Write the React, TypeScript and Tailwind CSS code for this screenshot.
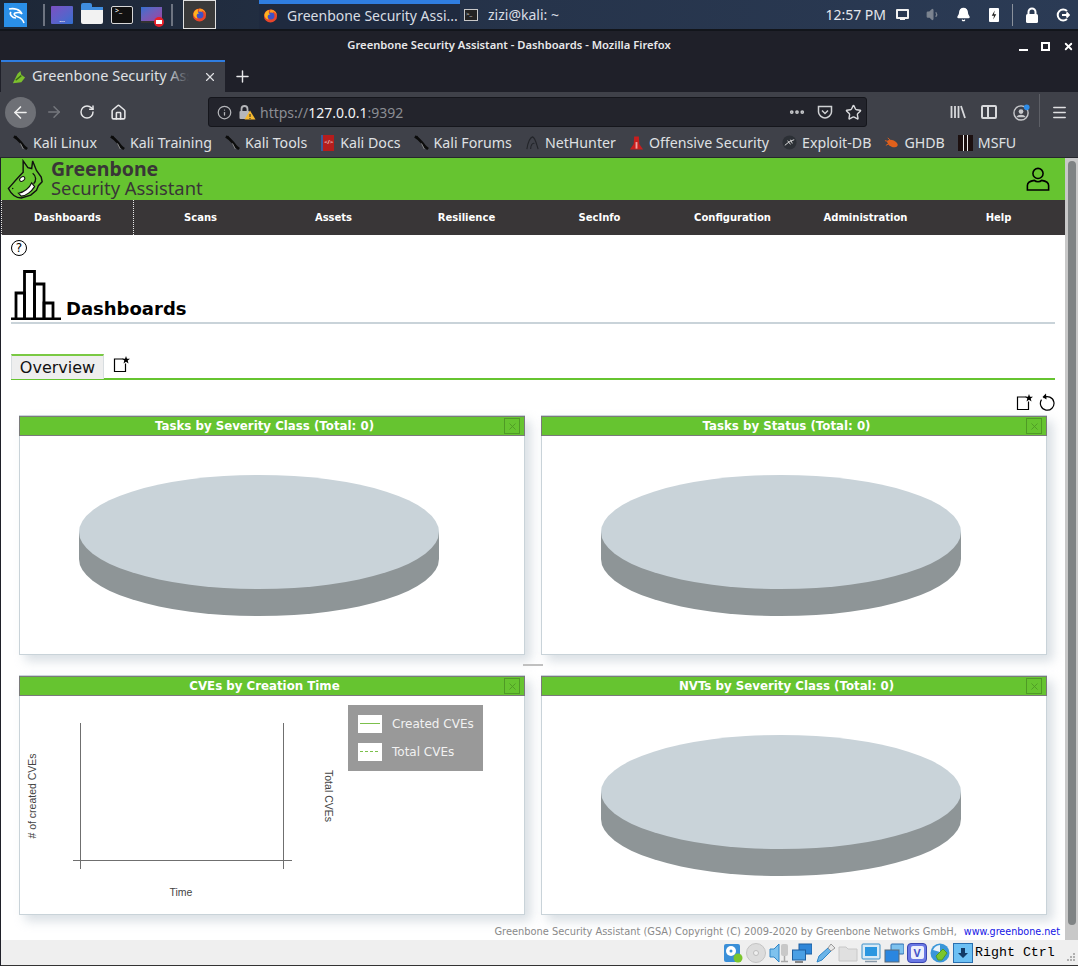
import React from 'react';
import {
  ArrowLeft, ArrowRight, RotateCw, Home, Info, MoreHorizontal, Star, Menu, Plus, X, Bell, Volume1,
} from 'lucide-react';

const BROWSER_FONT = "font-['Noto_Sans',sans-serif]";
const PAGE_FONT = "font-['DejaVu_Sans',sans-serif]";

const navItems = ['Dashboards', 'Scans', 'Assets', 'Resilience', 'SecInfo', 'Configuration', 'Administration', 'Help'];

const KaliIcon = () => (
  <svg viewBox="0 0 16 16" className="w-[15px] h-[15px]">
    <path d="M1 1.500 L5 4.500 L8.500 8 L12 12.500 L15 15" stroke="#0c0c0c" strokeWidth="2.800" fill="none" />
    <path d="M3 1 L7 7" stroke="#0c0c0c" strokeWidth="1.200" fill="none" />
    <path d="M8 9 L11 15" stroke="#8a8a8a" strokeWidth="1" fill="none" />
  </svg>
);

const bookmarks: { label: string; icon: React.ReactNode }[] = [
  { label: 'Kali Linux', icon: <KaliIcon /> },
  { label: 'Kali Training', icon: <KaliIcon /> },
  { label: 'Kali Tools', icon: <KaliIcon /> },
  {
    label: 'Kali Docs',
    icon: <span className="block w-[13px] h-[16px] bg-[#b51d1d] border-l-2 border-[#3a5a9a] text-white text-[6px] leading-[15px] text-center">&lt;/&gt;</span>,
  },
  { label: 'Kali Forums', icon: <KaliIcon /> },
  {
    label: 'NetHunter',
    icon: (
      <svg viewBox="0 0 16 16" className="w-[15px] h-[15px]">
        <path d="M2 15 C3 9 5 3 8 2 C11 3 12 9 14 15 M6 15 C6 11 8 8 10 9" stroke="#23252a" strokeWidth="1.200" fill="none" />
      </svg>
    ),
  },
  {
    label: 'Offensive Security',
    icon: (
      <svg viewBox="0 0 16 16" className="w-[15px] h-[16px]">
        <path d="M5.500 1 H10.500 L11 9 L15 15 H1 L5 9 Z" fill="#c81e1e" />
        <path d="M7 7 H9 V14 H7 Z" fill="#f0a0a0" />
      </svg>
    ),
  },
  {
    label: 'Exploit-DB',
    icon: (
      <svg viewBox="0 0 16 16" className="w-[15px] h-[15px]">
        <circle cx="8" cy="8" r="7.500" fill="#2c3036" />
        <path d="M3 11 L8 7 L13 5 M6 6 L9 10 M9 5 L11 9" stroke="#ddd" strokeWidth="1" fill="none" />
      </svg>
    ),
  },
  {
    label: 'GHDB',
    icon: (
      <svg viewBox="0 0 16 16" className="w-[15px] h-[15px]">
        <ellipse cx="9" cy="9" rx="6" ry="3.500" fill="#e0601c" transform="rotate(25 9 9)" />
        <path d="M1 6 L5 7 M2 11 L6 9 M4 3 L7 6" stroke="#e0601c" strokeWidth="1" />
      </svg>
    ),
  },
  {
    label: 'MSFU',
    icon: (
      <span className="flex w-[15px] h-[16px] bg-[#1c1010] justify-center">
        <span className="w-[5px] h-full border-x border-[#eee]" />
      </span>
    ),
  },
];

// flat "empty" pie the dashboards draw when there is no data
const EmptyPie = () => (
  <svg viewBox="0 0 504 218" className="w-full h-full">
    <path d="M59 96 V123 A180 57 0 0 0 419 123 V96 Z" fill="#8e9597" />
    <ellipse cx="239" cy="96" rx="180" ry="57" fill="#c9d3d9" />
  </svg>
);

const LegendLine = ({ dashed }: { dashed?: boolean }) => (
  <svg viewBox="0 0 24 18" className="w-[24px] h-[18px] bg-white">
    <path d="M2 8.500 H22" stroke="#7cc04c" strokeWidth="1" strokeDasharray={dashed ? '3 2' : undefined} />
  </svg>
);

const LineChart = () => (
  <div className="relative w-full h-full">
    <svg viewBox="0 0 504 218" className="w-full h-full">
      <g stroke="#6f6f6f" strokeWidth="1" fill="none">
        <path d="M60.500 27 V173" />
        <path d="M263.500 27 V173" />
        <path d="M53 164.500 H272" />
      </g>
      <g fontFamily="'Liberation Sans', sans-serif" fontSize="10.500" fill="#444">
        <text x="161" y="200" textAnchor="middle">Time</text>
        <text transform="translate(16 100) rotate(-90)" textAnchor="middle"># of created CVEs</text>
        <text transform="translate(305 100) rotate(90)" textAnchor="middle">Total CVEs</text>
      </g>
    </svg>
    <div className="absolute left-[328px] top-[9px] w-[135px] h-[66px] bg-[#999999] text-[#f2f2f2] text-[12px]">
      <div className="flex items-center h-[18px] mt-[10px] ml-[10px]">
        <LegendLine />
        <span className="ml-[10px]">Created CVEs</span>
      </div>
      <div className="flex items-center h-[18px] mt-[10px] ml-[10px]">
        <LegendLine dashed />
        <span className="ml-[10px]">Total CVEs</span>
      </div>
    </div>
  </div>
);

const Panel = ({ title, children }: { title: string; children: React.ReactNode }) => (
  <div className="h-[240px] flex flex-col bg-white border border-[#c9d3d9] shadow-[6px_6px_10px_rgba(170,185,195,0.45)]">
    <div className="relative h-[20px] shrink-0 -mx-px pr-[15px] bg-[#66c430] border border-[#7a7a7a] text-center text-white font-bold text-[11.8px] leading-[18px]">
      {title}
      <span className="absolute right-[4px] top-[1px] w-[16px] h-[16px] border border-[#4f9a26] flex items-center justify-center">
        <X className="w-[11px] h-[11px] text-[#4f9a26]" strokeWidth={2} />
      </span>
    </div>
    <div className="flex-1 min-h-0">{children}</div>
  </div>
);

const NewDashboardIcon = () => (
  <svg viewBox="0 0 18 18" className="w-[18px] h-[18px]">
    <path d="M10.500 4 H1.500 V16.500 H12.500 V8.500" fill="none" stroke="#000" strokeWidth="1.200" />
    <path d="M13 1 L14 3.700 L17 3.800 L14.700 5.600 L15.500 8.400 L13 6.800 L10.500 8.400 L11.300 5.600 L9 3.800 L12 3.700 Z" fill="#000" />
  </svg>
);

const DashboardLogo = () => (
  <svg viewBox="0 0 50 50" className="w-[50px] h-[50px] shrink-0">
    <g fill="none" stroke="#000" strokeWidth="2.800">
      <path d="M5 49 V23 H13.500 V49" />
      <path d="M13.500 49 V1.500 H23.500 V49" />
      <path d="M23.500 49 V14 H33 V49" />
      <path d="M33 49 V33 H42 V49" />
    </g>
    <path d="M0 47.500 H50 V50 H0 Z" fill="#000" />
  </svg>
);

const GreenboneLogo = () => (
  <svg viewBox="0 0 40 42" className="w-[38px] h-[40px] shrink-0">
    <path
      d="M1.500 31 C6 26 11 20 17 14 L17 2 L22 9 L26 10 L27 2 L31 12 L36 19 L37 24 L33 28 L31 33 L25 38 L15 41 C9 41 4 36 1.500 31 Z"
      fill="#66c430"
      stroke="#111"
      strokeWidth="1.500"
    />
    <ellipse cx="16" cy="21" rx="3" ry="2" fill="#fff" stroke="#111" transform="rotate(-35 16 21)" />
    <path d="M12 36 C18 35 24 30 26 25 L29 29 C26 34 20 39 15 39 Z" fill="#fff" stroke="#111" strokeWidth="1.200" />
    <path d="M27 15 C31 18 31 23 28 26" fill="none" stroke="#111" strokeWidth="1.400" />
    <circle cx="6" cy="31" r="0.800" fill="#111" />
  </svg>
);

const FirefoxIcon = ({ className }: { className: string }) => (
  <svg viewBox="0 0 16 16" className={className}>
    <circle cx="8" cy="8.500" r="7" fill="#e8452c" />
    <path d="M8 1.500 C12 1.500 15 5 15 8.500 C14 5 12 4 10 4 C11 5 11 6 10.500 7 L7 6 Z" fill="#ff9a1f" />
    <circle cx="8.500" cy="8.500" r="3.700" fill="#3d52c8" />
    <path d="M1.500 7 C2.500 3.500 5 2 7 2 C5.500 4 6 6 8 7 C5 7 4 9 6 12.500 C3 12 1.500 9.500 1.500 7 Z" fill="#ffb21f" />
  </svg>
);

const Taskbar = () => (
  <div className={`h-[31px] shrink-0 flex items-center bg-gradient-to-r from-[#1d2737] via-[#26344b] to-[#2b3b55] border-b-2 border-[#12151b] ${BROWSER_FONT}`}>
    <div className="w-[23px] h-[24px] ml-[4px] bg-[#2a8fe8] flex items-center justify-center">
      <svg viewBox="0 0 20 20" className="w-[20px] h-[20px]">
        <path d="M3 4 C8 3 14 4 16 9 C15 8 12 7 9 8 C7 9 9 11 12 12 C15 13 17 15 18 18 M5 7 C3 9 6 13 10 13" fill="none" stroke="#fff" strokeWidth="1.600" />
      </svg>
    </div>
    <span className="w-[2px] h-[22px] ml-[16px] bg-[#6d7481]" />
    <span className="w-[22px] h-[18px] ml-[6px] rounded-[1px] bg-gradient-to-br from-[#7a4fc2] to-[#2d6fd0] flex items-end justify-center text-white text-[7px] leading-[8px]">...</span>
    <span className="relative w-[22px] h-[17px] ml-[8px] mt-[2px] rounded-[2px] bg-[#f2f2f2]">
      <span className="absolute -top-[4px] left-0 w-[11px] h-[5px] rounded-t-[2px] bg-[#3f8de0]" />
      <span className="absolute top-0 left-0 w-full h-[3px] bg-[#3f8de0]" />
    </span>
    <span className="w-[22px] h-[18px] ml-[8px] rounded-[2px] bg-[#111] border border-[#d8d8d8] text-white text-[7px] leading-[8px] pl-[3px]">&gt;_</span>
    <span className="relative w-[21px] h-[16px] ml-[8px] bg-gradient-to-br from-[#2d6fd0] to-[#9a3fa0] border-b-2 border-[#333]">
      <span className="absolute -right-[2px] -bottom-[6px] w-[10px] h-[10px] rounded-full bg-[#e8202a] flex items-center justify-center">
        <span className="w-[6px] h-[4px] bg-white" />
      </span>
    </span>
    <span className="w-[2px] h-[22px] ml-[9px] bg-[#6d7481]" />
    <span className="w-[33px] h-[29px] ml-[10px] bg-[#3a3a3a] border border-[#e0e0e0] flex items-center justify-center">
      <FirefoxIcon className="w-[15px] h-[15px]" />
    </span>
    <div className="w-[201px] h-[29px] ml-[43px] self-start flex items-center bg-[#1f2a3f] border-t-[4px] border-[#2f7de0] pl-[4px] pb-[3px] text-[#d8dde4] text-[14px] whitespace-nowrap">
      <FirefoxIcon className="w-[15px] h-[15px]" />
      <span className="ml-[9px]">Greenbone Security Assi...</span>
    </div>
    <div className="flex items-center h-[29px] ml-[4px] text-[#d8dde4] text-[14px] whitespace-nowrap">
      <span className="w-[14px] h-[12px] bg-[#222] border border-[#c8c8c8] text-white text-[6px] leading-[8px] pl-[1px]">&gt;_</span>
      <span className="ml-[10px]">zizi@kali: ~</span>
    </div>
    <div className="ml-auto flex items-center text-[#e4e7ec]">
      <span className="text-[14px] whitespace-nowrap">12:57 PM</span>
      <span className="flex flex-col items-center ml-[10px]">
        <span className="w-[13px] h-[10px] border-2 border-[#f2f2f2] rounded-[1px]" />
        <span className="w-[5px] h-[1px] bg-[#f2f2f2]" />
      </span>
      <Volume1 className="w-[15px] h-[15px] ml-[17px] text-[#7c8490]" fill="#7c8490" />
      <Bell className="w-[15px] h-[15px] ml-[15px] text-white" fill="#fff" />
      <span className="w-[10px] h-[14px] ml-[18px] bg-white rounded-[1px] flex items-center justify-center">
        <svg viewBox="0 0 8 12" className="w-[6px] h-[10px]">
          <path d="M5 0 L1 7 H4 L3 12 L7 5 H4 Z" fill="#222" />
        </svg>
      </span>
      <span className="w-[1px] h-[22px] ml-[13px] bg-[#8a919c]" />
      <svg viewBox="0 0 14 16" className="w-[14px] h-[16px] ml-[12px]">
        <path d="M3.500 7 V5 A3.500 3.500 0 0 1 10.500 5 V7" fill="none" stroke="#fff" strokeWidth="2" />
        <rect x="1" y="7" width="12" height="9" rx="1.500" fill="#fff" />
      </svg>
      <svg viewBox="0 0 14 14" className="w-[14px] h-[14px] ml-[17px] mr-[8px]">
        <path d="M11 3 A5.500 5.500 0 1 0 11 11" fill="none" stroke="#fff" strokeWidth="2" />
        <path d="M6 7 H13 M10.500 4.500 L13 7 L10.500 9.500" fill="none" stroke="#fff" strokeWidth="1.800" />
      </svg>
    </div>
  </div>
);

const BrowserChrome = () => (
  <div className={`shrink-0 ${BROWSER_FONT}`}>
    <div className="h-[29px] flex items-center justify-center relative pr-[60px] bg-[#1f2029] text-[#e8e8ea] text-[11.2px] font-semibold">
      Greenbone Security Assistant - Dashboards - Mozilla Firefox
      <div className="absolute right-[4px] top-[10px] flex items-center text-white">
        <span className="w-[9px] h-[9px] flex items-end"><span className="w-full h-[2px] bg-white" /></span>
        <span className="w-[9px] h-[9px] ml-[13px] border-2 border-white" />
        <X className="w-[11px] h-[11px] ml-[13px]" strokeWidth={4} />
      </div>
    </div>
    <div className="h-[32px] flex bg-[#1f2029]">
      <div className="w-[224px] ml-[1px] flex items-center bg-[#3f4149] border-t-2 border-[#2f7de0] text-[#dfe0e3] text-[14.5px] whitespace-nowrap">
        <svg viewBox="0 0 16 16" className="w-[15px] h-[15px] ml-[10px] shrink-0">
          <path d="M2 14 L7 4 L10 1 L11 5 L15 8 L11 13 Z" fill="#7cc02e" />
          <path d="M5 11 L11 6" stroke="#3a6a12" strokeWidth="1.500" />
        </svg>
        <span className="relative ml-[6px] mb-[2px] w-[157px] overflow-hidden">
          Greenbone Security Assis
          <span className="absolute right-0 top-0 bottom-0 w-[22px] bg-gradient-to-r from-transparent to-[#3f4149]" />
        </span>
        <X className="w-[14px] h-[14px] ml-[14px] shrink-0" />
      </div>
      <div className="flex items-center ml-[8px]">
        <Plus className="w-[19px] h-[19px] text-[#e8e8ea]" strokeWidth={1.800} />
      </div>
    </div>
    <div className="h-[36px] flex items-center pt-[4px] bg-[#3f4149]">
      <span className="w-[31px] h-[31px] ml-[5px] rounded-full bg-[#6e7076] flex items-center justify-center">
        <ArrowLeft className="w-[19px] h-[19px] text-[#f0f0f0]" strokeWidth={2} />
      </span>
      <ArrowRight className="w-[18px] h-[18px] ml-[9px] text-[#75777d]" strokeWidth={2} />
      <RotateCw className="w-[16px] h-[16px] ml-[16px] text-[#e6e6e8]" strokeWidth={2.200} />
      <Home className="w-[17px] h-[17px] ml-[15px] text-[#e6e6e8]" strokeWidth={2.200} />
      <div className="w-[659px] h-[30px] ml-[81px] flex items-center rounded-[3px] bg-[#23242c] border border-[#15161c] text-[14px]">
        <Info className="w-[15px] h-[15px] ml-[8px] text-[#b5b6ba]" />
        <svg viewBox="0 0 18 16" className="w-[18px] h-[16px] ml-[6px]">
          <path d="M3.500 7 V5 A3 3 0 0 1 9.500 5 V7" fill="none" stroke="#b5b6ba" strokeWidth="1.800" />
          <rect x="1.500" y="7" width="10" height="8" rx="1" fill="#b5b6ba" />
          <path d="M12 6.500 L17.500 15.500 H6.500 Z" fill="#f5b82e" />
          <path d="M12 10 V13 M12 14 V15" stroke="#222" strokeWidth="1" />
        </svg>
        <span className="ml-[4px] text-[#8b8d93]">https://</span>
        <span className="text-[#f2f2f4]">127.0.0.1</span>
        <span className="text-[#8b8d93]">:9392</span>
        <MoreHorizontal className="w-[18px] h-[18px] ml-auto text-[#c8c9cc]" strokeWidth={3} />
        <svg viewBox="0 0 16 16" className="w-[16px] h-[16px] ml-[11px]">
          <path d="M1.500 2.500 H14.500 V8 C14.500 11 11 14 8 14 C5 14 1.500 11 1.500 8 Z M5 6.500 L8 9.500 L11 6.500" fill="none" stroke="#d0d1d4" strokeWidth="1.500" />
        </svg>
        <Star className="w-[17px] h-[17px] ml-[12px] mr-[4px] text-[#d8d9dc]" strokeWidth={2} />
      </div>
      <svg viewBox="0 0 16 16" className="w-[16px] h-[16px] ml-[83px]">
        <path d="M1.500 2 V14 M5 2 V14 M8.500 2 V14 M11 2 L15 14" stroke="#d8d9dc" strokeWidth="1.800" fill="none" />
      </svg>
      <span className="flex w-[16px] h-[14px] ml-[15px] border-2 border-[#d8d9dc] rounded-[2px]">
        <span className="w-[6px] h-full border-r-2 border-[#d8d9dc]" />
      </span>
      <svg viewBox="0 0 18 18" className="w-[17px] h-[17px] ml-[16px]">
        <circle cx="8.500" cy="9.500" r="7.500" fill="none" stroke="#c8c9cc" strokeWidth="1.500" />
        <circle cx="8.500" cy="8" r="2.500" fill="#c8c9cc" />
        <path d="M3.500 14 C5 10.500 12 10.500 13.500 14" fill="#c8c9cc" />
        <circle cx="14.500" cy="3.500" r="3" fill="#2f8de8" />
      </svg>
      <span className="w-[1px] h-[33px] ml-[9px] -mt-[4px] bg-[#5d5f66]" />
      <Menu className="w-[17px] h-[17px] ml-[11px] text-[#e0e0e2]" strokeWidth={2.200} />
    </div>
    <div className="h-[30px] flex items-center bg-[#3f4149] pl-[13px] pt-px text-[#dfe0e3] text-[14.2px] whitespace-nowrap border-b border-[#26272d]">
      {bookmarks.map(b => (
        <div key={b.label} className="flex items-center mr-[13px]">
          <span className="w-[15px] flex justify-center">{b.icon}</span>
          <span className="ml-[5px]">{b.label}</span>
        </div>
      ))}
    </div>
  </div>
);

const GsaHeader = () => (
  <div className="h-[42px] shrink-0 flex items-center bg-[#66c430] pl-[6px] pr-[15px]">
    <GreenboneLogo />
    <div className={`ml-[6px] -mt-[2px] text-[#393637] ${BROWSER_FONT}`}>
      <div className="text-[19.5px] leading-[19px] font-bold">Greenbone</div>
      <div className="text-[18.4px] leading-[19px]">Security Assistant</div>
    </div>
    <svg viewBox="0 0 26 26" className="w-[24px] h-[24px] ml-auto">
      <circle cx="13" cy="7" r="5.500" fill="none" stroke="#000" strokeWidth="1.700" />
      <path d="M1.500 25 V20 C1.500 16 6 15 9 14.500 C11 16.500 15 16.500 17 14.500 C20 15 24.500 16 24.500 20 V25 Z" fill="none" stroke="#000" strokeWidth="1.700" />
    </svg>
  </div>
);

// the little VirtualBox status icons, bottom right
const statusIcons: React.ReactNode[] = [
  <g key="hdd">
    <rect x="1" y="1" width="16" height="18" rx="2" fill="#3a8fd8" />
    <circle cx="8" cy="8" r="5" fill="#fff" />
    <circle cx="8" cy="8" r="1.500" fill="#3a8fd8" />
    <circle cx="15" cy="15" r="4.500" fill="#7bc62d" />
  </g>,
  <g key="cd">
    <circle cx="10" cy="10" r="9.500" fill="#dcdcdc" stroke="#c4c4c4" />
    <circle cx="10" cy="10" r="2.500" fill="#efefef" stroke="#bdbdbd" />
  </g>,
  <g key="audio">
    <path d="M1 6 H5 L10 1 V19 L5 14 H1 Z" fill="#7ec2ee" stroke="#2f86c8" />
    <rect x="12" y="1" width="7" height="12" rx="2" fill="#c8c8c8" />
    <path d="M15.500 13 V18 M12 18.500 H19" stroke="#a8a8a8" strokeWidth="1.500" />
  </g>,
  <g key="net">
    <rect x="7" y="1" width="13" height="10" fill="#2f86d8" stroke="#1f5f9f" />
    <rect x="0.500" y="7" width="13" height="10" fill="#4a9fe4" stroke="#1f5f9f" />
    <path d="M3 19 H11" stroke="#666" strokeWidth="1.500" />
  </g>,
  <g key="usb">
    <path d="M2 19 L4 13 L13 5 L16 8 L7 17 Z" fill="#6ab4e8" stroke="#2f86c8" />
    <path d="M13 5 L16 1 L20 5 L16 8 Z" fill="#e8e8e8" stroke="#9a9a9a" />
  </g>,
  <g key="folder">
    <path d="M1 4 H8 L10 6 H19 V18 H1 Z" fill="#e0e0e0" stroke="#c8c8c8" />
  </g>,
  <g key="display">
    <rect x="1" y="1" width="18" height="15" rx="1" fill="#d8eaf6" stroke="#3a8fc8" />
    <rect x="4" y="4" width="12" height="9" fill="#2a96e0" />
    <path d="M4 18.500 H16" stroke="#8a9aa8" strokeWidth="1.500" />
  </g>,
  <g key="capture">
    <rect x="7" y="1" width="13" height="10" rx="1" fill="#7ec2ee" stroke="#2f6fb0" />
    <rect x="1" y="7" width="14" height="12" fill="#2a86e0" stroke="#5a6a78" />
  </g>,
  <g key="guest">
    <circle cx="10" cy="10" r="9.500" fill="#3a96d8" />
    <path d="M3 7 A8 8 0 0 1 10 2 L10 9 Z" fill="#e8f2fa" />
    <path d="M6 13 L13 6 L17 10 L12 17 L8 17 Z" fill="#7bc62d" stroke="#4f9a26" />
  </g>,
];

const StatusBar = () => (
  <div className="h-[26px] shrink-0 flex items-center bg-[#efefef] border-b border-[#333] ml-px pl-[722px]">
    {statusIcons.slice(0, 8).map((icon, i) => (
      <svg key={i} viewBox="0 0 20 20" className="w-[20px] h-[20px] mr-[3px] shrink-0">{icon}</svg>
    ))}
    <span className="w-[20px] h-[20px] mr-[3px] rounded-[4px] bg-[#6a78e4] border border-[#3a46b0] flex items-center justify-center">
      <span className="w-[13px] h-[13px] rounded-[2px] bg-[#eef0fc] flex items-center justify-center text-[#4a56c8] text-[11px] leading-none font-bold">V</span>
    </span>
    <svg viewBox="0 0 20 20" className="w-[20px] h-[20px] mr-[3px] shrink-0">{statusIcons[8]}</svg>
    <span className="w-[20px] h-[20px] bg-[#6cc0f4] border border-[#2a70b0] flex items-center justify-center">
      <svg viewBox="0 0 12 12" className="w-[12px] h-[12px]">
        <path d="M4 1 H8 V6 H11 L6 11 L1 6 H4 Z" fill="#123a66" />
      </svg>
    </span>
    <span className="ml-[2px] font-['Liberation_Mono',monospace] text-[13.3px] text-black whitespace-nowrap">Right Ctrl</span>
    <span className="ml-auto mr-[3px] mt-[8px] grid grid-cols-3 gap-[1px]">
      {[0, 1, 2, 3, 4, 5, 6, 7, 8].map(n => (
        <span key={n} className={`w-[2px] h-[2px] ${n === 0 || n === 1 || n === 3 ? 'bg-transparent' : 'bg-[#b0b0b0]'}`} />
      ))}
    </span>
  </div>
);

export default function App() {
  return (
    <div className="w-[1078px] h-[966px] overflow-hidden flex flex-col bg-[#1f2029]">
      <Taskbar />
      <BrowserChrome />

      <div className="h-[782px] shrink-0 flex ml-px">
        <div className="flex-1 min-w-0 flex flex-col bg-white">
          <GsaHeader />
          <nav className={`h-[35px] shrink-0 grid grid-cols-8 bg-[#393637] text-white text-[10px] font-bold ${PAGE_FONT}`}>
            {navItems.map((item, i) => (
              <div
                key={item}
                className={`flex items-center justify-center ${i === 0 ? 'border-x border-dotted border-[#e8e8e8]' : ''}`}
              >
                {item}
              </div>
            ))}
          </nav>

          <main className={`flex-1 min-h-0 flex flex-col pl-[10px] pr-[10px] ${PAGE_FONT}`}>
            <div className="h-[16px] mt-[5px] w-[16px] rounded-full border-[1.5px] border-black flex items-center justify-center text-[12px] leading-none">
              ?
            </div>

            <div className="h-[54px] mt-[14px] flex items-end border-b-2 border-[#c9d3d9] pb-[2px]">
              <DashboardLogo />
              <h1 className="ml-[5px] text-[18px] leading-[22px] font-bold text-black">Dashboards</h1>
            </div>

            <div className="h-[26px] mt-[30px] flex border-b-2 border-[#66c430]">
              <div className="w-[93px] h-[25px] flex items-center justify-center bg-[#eeeeee] border-t-2 border-[#7ac943] border-x border-x-[#d8dde0] text-[16px] text-[#111] -mb-px">
                Overview
              </div>
              <div className="ml-[9px] pt-[1px]">
                <NewDashboardIcon />
              </div>
            </div>

            <div className="h-[18px] mt-[13px] flex justify-end items-center gap-[4px] -mr-[1px]">
              <NewDashboardIcon />
              <svg viewBox="0 0 18 18" className="w-[18px] h-[18px]">
                <path d="M5.500 3.700 A6.800 6.800 0 1 1 3.500 5.700" fill="none" stroke="#000" strokeWidth="1.200" transform="translate(0 1)" />
                <path d="M8 0.500 L4.500 4 L8.500 6.500 Z" fill="#000" />
              </svg>
            </div>

            <div className="relative grid grid-cols-[506px_506px] gap-x-[16px] gap-y-[20px] mt-[4px] ml-[8px]">
              <Panel title="Tasks by Severity Class (Total: 0)"><EmptyPie /></Panel>
              <Panel title="Tasks by Status (Total: 0)"><EmptyPie /></Panel>
              <Panel title="CVEs by Creation Time"><LineChart /></Panel>
              <Panel title="NVTs by Severity Class (Total: 0)"><EmptyPie /></Panel>
              <span className="absolute left-[504px] top-[249px] w-[20px] h-[2px] bg-[#c0c0c0]" />
            </div>

            <div className="mt-auto h-[16px] -mr-[5px] flex justify-end items-center gap-[7px] whitespace-nowrap">
              <span className="text-[#8a8a8a] text-[9.85px]">Greenbone Security Assistant (GSA) Copyright (C) 2009-2020 by Greenbone Networks GmbH,</span>
              <span className="text-[#1414e6] text-[9.6px]">www.greenbone.net</span>
            </div>
          </main>
        </div>

        <div className="w-[13px] shrink-0 bg-[#c8c8c8] flex justify-center">
          <div className="w-[8px] h-[764px] rounded-[4px] bg-[#7f8384] mt-[3px]" />
        </div>
      </div>

      <StatusBar />
    </div>
  );
}
